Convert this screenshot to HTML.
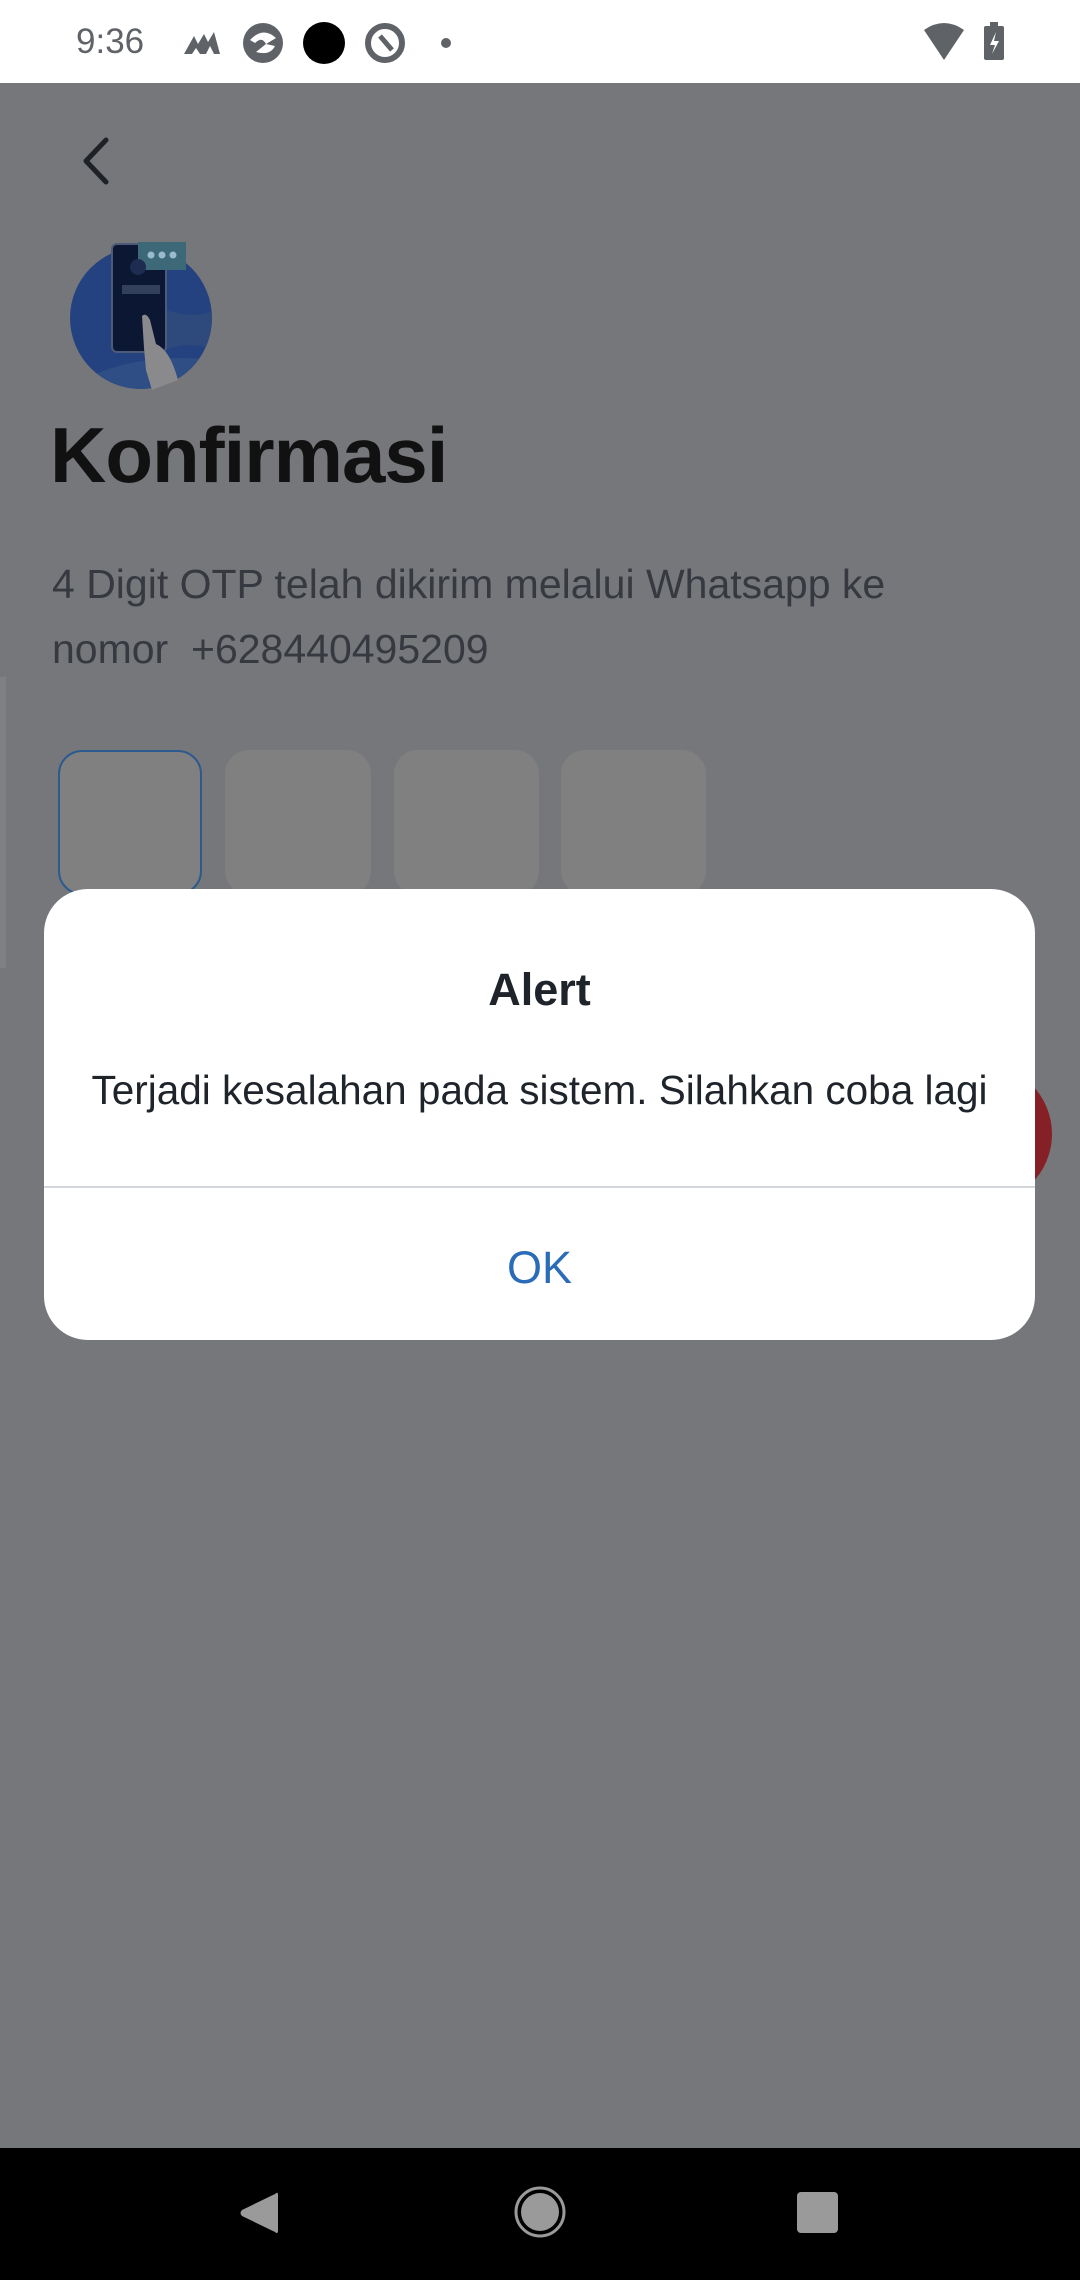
<!DOCTYPE html>
<html><head><meta charset="utf-8"><style>
*{margin:0;padding:0;box-sizing:border-box}
body{width:1080px;height:2280px;position:relative;overflow:hidden;background:#76777b;font-family:"Liberation Sans",sans-serif}
.abs{position:absolute}
</style></head><body>
<div class="abs" style="left:0;top:0;width:1080px;height:83px;background:#fff"></div>
<div class="abs" style="left:76px;top:22px;font-size:35px;color:#5f6368">9:36</div>
<svg class="abs" style="left:180px;top:18px" width="280" height="50" viewBox="0 0 280 50">
 <path d="M4 36 L14 18 L18 26 L24 16 L28 24 L34 14 L40 36 L34 36 L30 28 L26 36 L20 36 L16 30 L12 36Z" fill="#5f6368"/>
 <circle cx="83" cy="25" r="20" fill="#5f6368"/><path d="M70 22 Q83 8 96 20 L86 26 Q82 18 75 25Z M76 34 Q90 38 95 28 L86 26Z" fill="#fff"/>
 <circle cx="144" cy="25" r="21" fill="#000"/>
 <circle cx="205" cy="25" r="17" fill="none" stroke="#5f6368" stroke-width="6"/><path d="M200 18 L212 32" stroke="#5f6368" stroke-width="5"/>
 <circle cx="266" cy="25" r="5" fill="#5f6368"/>
</svg>
<svg class="abs" style="left:920px;top:20px" width="90" height="44" viewBox="0 0 90 44">
 <path d="M4 10 Q24 -4 44 10 L24 40Z" fill="#5f6368"/>
 <rect x="64" y="6" width="20" height="34" rx="2" fill="#5f6368"/><rect x="70" y="2" width="8" height="5" fill="#5f6368"/>
 <path d="M76 12 L70 25 L75 25 L72 34 L79 21 L74 21Z" fill="#fff"/>
</svg>
<svg class="abs" style="left:76px;top:136px" width="40" height="50" viewBox="0 0 40 50"><path d="M30 4 L10 25 L30 46" fill="none" stroke="#1e2126" stroke-width="5" stroke-linecap="round" stroke-linejoin="round"/></svg>
<svg class="abs" style="left:66px;top:240px" width="150" height="150" viewBox="0 0 150 150">
 <defs><clipPath id="c"><circle cx="75" cy="78" r="71"/></clipPath></defs>
 <circle cx="75" cy="78" r="71" fill="#24427f"/>
 <g clip-path="url(#c)"><path d="M0 150 Q60 110 150 120 L150 150Z" fill="#2f4e85"/><path d="M100 70 Q130 80 150 70 L150 110 Q120 100 100 110Z" fill="#2e4a7c"/></g>
 <rect x="46" y="4" width="54" height="108" rx="5" fill="#0b1733" stroke="#4d5a78" stroke-width="2"/>
 <rect x="72" y="2" width="48" height="28" fill="#3c6878"/><circle cx="85" cy="15" r="3.5" fill="#9bc"/><circle cx="96" cy="15" r="3.5" fill="#9bc"/><circle cx="107" cy="15" r="3.5" fill="#9bc"/>
 <rect x="56" y="45" width="38" height="9" fill="#33405c"/><circle cx="72" cy="27" r="8" fill="#1d2c50"/>
 <path d="M78 108 L76 76 Q80 72 84 80 L90 104 Q104 110 112 140 L86 150 L80 130Z" fill="#8a8a8d"/>
</svg>
<div class="abs" style="left:50px;top:410px;font-size:78px;font-weight:bold;color:#111;letter-spacing:-1px">Konfirmasi</div>
<div class="abs" style="left:52px;top:552px;font-size:41px;line-height:65px;color:#363940">4 Digit OTP telah dikirim melalui Whatsapp ke<br>nomor&nbsp; +628440495209</div>
<div class="abs" style="left:0;top:677px;width:6px;height:291px;background:#7f8084"></div>
<div class="abs" style="left:58px;top:750px;width:144px;height:145px;border-radius:24px;background:#808080;border:2px solid #2c5a8e"></div>
<div class="abs" style="left:225px;top:750px;width:146px;height:145px;border-radius:24px;background:#808080"></div>
<div class="abs" style="left:394px;top:750px;width:145px;height:145px;border-radius:24px;background:#808080"></div>
<div class="abs" style="left:561px;top:750px;width:145px;height:145px;border-radius:24px;background:#808080"></div>
<div class="abs" style="left:912px;top:1064px;width:140px;height:140px;border-radius:50%;background:#862027"></div>
<div class="abs" style="left:44px;top:889px;width:991px;height:451px;border-radius:44px;background:#fff"></div>
<div class="abs" style="left:44px;top:964px;width:991px;text-align:center;font-size:45px;font-weight:bold;color:#1f242b">Alert</div>
<div class="abs" style="left:44px;top:1067px;width:991px;text-align:center;font-size:40.5px;color:#1f242b">Terjadi kesalahan pada sistem. Silahkan coba lagi</div>
<div class="abs" style="left:44px;top:1186px;width:991px;height:2px;background:#d3d6db"></div>
<div class="abs" style="left:44px;top:1242px;width:991px;text-align:center;font-size:45px;color:#2b6cb8">OK</div>
<div class="abs" style="left:0;top:2148px;width:1080px;height:132px;background:#000"></div>
<svg class="abs" style="left:0;top:2148px" width="1080" height="132" viewBox="0 0 1080 132">
 <path d="M278 47 L278 82 Q278 87 275 84 L242 68 Q239 65 242 62 L275 46 Q278 43 278 47Z" fill="#9a9a9a"/>
 <circle cx="540" cy="64" r="24" fill="none" stroke="#9a9a9a" stroke-width="3"/><circle cx="540" cy="64" r="19" fill="#9a9a9a"/>
 <rect x="797" y="44" width="41" height="41" rx="4" fill="#9a9a9a"/>
</svg>
</body></html>
